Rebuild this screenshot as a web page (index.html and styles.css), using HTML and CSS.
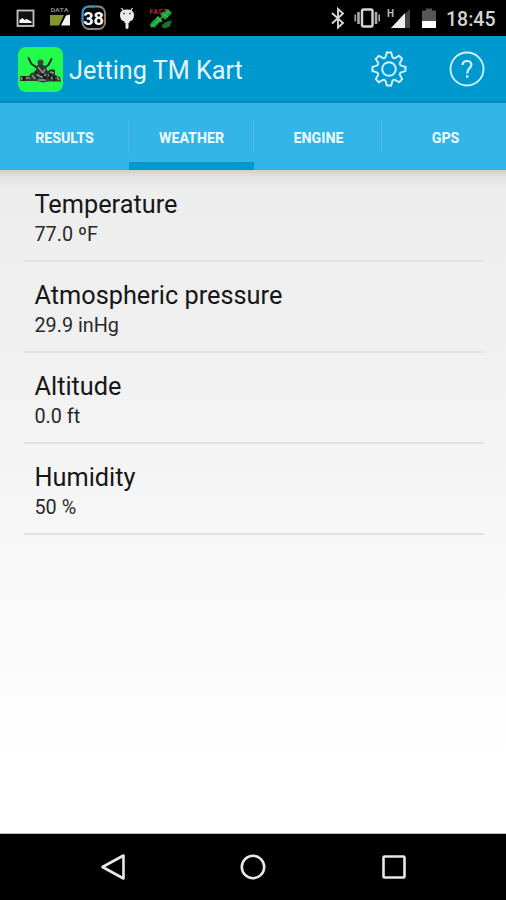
FILE: index.html
```html
<!DOCTYPE html>
<html lang="en">
<head>
<meta charset="utf-8">
<title>Jetting TM Kart</title>
<link rel="stylesheet" href="styles.css">
</head>
<body>
<div class="phone">
  <header class="status">
    <svg class="status-icons" width="180" height="36" viewBox="0 0 180 36">
      <rect x="17.500" y="10.500" width="16" height="15.500" fill="#111" stroke="#c4c4c4" stroke-width="1.800"/>
      <path d="M19.500 23v-3l3-2 2 2 2-1 5 2.500V23z" fill="#fff"/>
      <text class="tiny" x="50.500" y="12" textLength="18" lengthAdjust="spacingAndGlyphs">DATA</text>
      <path d="M50 15h14l-5 10.500h-9z" fill="#86962f"/>
      <path d="M70 14.500v11h-9l5-10z" fill="#f2f2f2"/>
      <rect x="82.500" y="6.500" width="22.500" height="22.500" rx="6.500" fill="#080808" stroke="#8b8b8b" stroke-width="1.800"/>
      <path d="M82.500 23V13q0-6.500 6.500-6.500h5" fill="none" stroke="#2298c8" stroke-width="1.800"/>
      <text class="badge" x="93.500" y="24.500" text-anchor="middle">38</text>
      <path d="M121.500 8l2 3M132.500 8l-2 3" stroke="#e8e8e8" stroke-width="1.300"/>
      <path d="M120 15q0-5.500 7-5.500t7 5.500-4.500 6.500v1.500h-1v5q-1.500 2-3 0v-5h-1v-1.500q-4.500-1-4.500-6.500z" fill="#eaeaea"/>
      <circle cx="124" cy="13.500" r=".9" fill="#444"/><circle cx="130" cy="13.500" r=".9" fill="#444"/>
      <path d="M153 21l5-5 4 4-5 5zM160 14l8-5 4 4-7 7zM149.500 25l4-5 5 3-4 5z" fill="#1c9e35"/>
      <path d="M161.500 27q1-5.500 10.500-6.500l-2 6-5 2z" fill="#1b6f2c"/>
      <path d="M151 27l18-16M157 17l5 5M163 13l5 4" stroke="#3bc24f" stroke-width="1.300" fill="none"/>
      <text class="tiny fast" x="149.500" y="13.500" textLength="18">FAST</text>
    </svg>
    <svg class="status-icons" width="116" height="36" viewBox="328 0 116 36">
      <path d="M332 13l11 10-5 4.500V9l5 4.500-11 10" fill="none" stroke="#d5d5d5" stroke-width="1.900"/>
      <rect x="362" y="9.500" width="10.500" height="17" rx="1.500" fill="#000" stroke="#d5d5d5" stroke-width="2.400"/>
      <path d="M358.500 12v12M376 12v12" stroke="#aaa" stroke-width="2.600"/><path d="M355.300 14.500v7M379.200 14.500v7" stroke="#aaa" stroke-width="1.600"/>
      <text class="net" x="387" y="17">H</text>
      <path d="M410 9v19h-19z" fill="#444"/><path d="M405 13v15h-14z" fill="#eee"/>
      <path d="M422 10.500h4V8.500h6v2h4V28h-14z" fill="#555"/><path d="M422 21h14v7h-14z" fill="#fff"/>
    </svg>
    <span class="clock">18:45</span>
  </header>

  <div class="appbar">
    <svg class="logo" width="45" height="45" viewBox="0 0 45 45">
      <rect width="45" height="45" rx="8" fill="#24fa4b"/>
      <path d="M10.500 11l3 6 6 4M33.500 12l-3 6-6 4" stroke="#192319" stroke-width="1.800" fill="none" stroke-linecap="round"/>
      <circle cx="22.500" cy="15.500" r="3" fill="#3b463f"/>
      <path d="M18 19l4.500-2 5 2 2 5 4-2 3.500 1v5l5 2 1 4.500H30l-5 1-6-1.500H2V29h9l2-3 5-1z" fill="#303732"/>
      <path d="M3.500 30v3M8 31h4M14 28l3 4M20 20l5 6M18 27l6 3 4-3M27 22l-2 4M30 28l5 4M32 25l4 1M39 30l2 3M20 33h8" stroke="#8d9690" stroke-width="1.500"/>
      <path d="M6 29v5M25 29l3 3M36 28v6M17 24l2 3M33 27l-2 5" stroke="#101510" stroke-width="1.800"/>
    </svg>
    <h1 class="title">Jetting TM Kart</h1>
    <div class="actions">
      <svg width="38" height="38" viewBox="-19 -19 38 38" fill="none" stroke="#d5f1fb" stroke-width="1.900" stroke-linejoin="round" stroke-linecap="round">
        <defs><path id="tooth" d="M-2.200-16.500H2.200L3.200-12.800C3.400-10.900 5.300-10.100 6.790-11.310L10.100-13.200"/></defs>
        <use href="#tooth"/>
        <use href="#tooth" transform="rotate(45)"/>
        <use href="#tooth" transform="rotate(90)"/>
        <use href="#tooth" transform="rotate(135)"/>
        <use href="#tooth" transform="rotate(180)"/>
        <use href="#tooth" transform="rotate(225)"/>
        <use href="#tooth" transform="rotate(270)"/>
        <use href="#tooth" transform="rotate(315)"/>
        <circle r="6.800"/>
      </svg>
      <svg width="38" height="38" viewBox="-19 -19 38 38" fill="none" stroke="#d5f1fb" stroke-width="1.800">
        <circle r="16.500"/>
        <path stroke-width="2.200" d="M-4.500-4Q-4.300-8 0-8T4.400-4.300C4.400-1 .2-.5.200 4.500"/>
        <path d="M.2 6.300v2.300" stroke-width="2.400"/>
      </svg>
    </div>
  </div>

  <nav class="tabs">
    <a class="tab">RESULTS</a>
    <a class="tab active">WEATHER</a>
    <a class="tab">ENGINE</a>
    <a class="tab">GPS</a>
  </nav>

  <main class="content">
    <section class="item"><h2 class="name">Temperature</h2><p class="value">77.0 ºF</p></section>
    <section class="item"><h2 class="name">Atmospheric pressure</h2><p class="value">29.9 inHg</p></section>
    <section class="item"><h2 class="name">Altitude</h2><p class="value">0.0 ft</p></section>
    <section class="item"><h2 class="name">Humidity</h2><p class="value">50 %</p></section>
  </main>

  <footer class="navbar">
    <svg width="30" height="30" viewBox="-15 -15 30 30"><path d="M-10.500 0L10.500-11.500V11.500z"/></svg>
    <svg width="30" height="30" viewBox="-15 -15 30 30"><circle r="11.200"/></svg>
    <svg width="30" height="30" viewBox="-15 -15 30 30"><rect x="-10.500" y="-10.500" width="21" height="21" rx="1"/></svg>
  </footer>
</div>
</body>
</html>
```
FILE: styles.css
```css
* { box-sizing: border-box; }

body {
  margin: 0;
  font-family: Roboto, sans-serif;
  background: #000;
}

.phone {
  width: 506px;
  height: 900px;
  display: flex;
  flex-direction: column;
  overflow: hidden;
}

.status {
  height: 36px;
  flex: none;
  display: flex;
  align-items: center;
  background: #000;
}

.status-icons { display: block; }
.status-icons + .status-icons { margin-left: 148px; }
.tiny { font: 700 6px Roboto, sans-serif; fill: #858585; }
.fast { fill: #b3232b; font-size: 7px; }
.badge { font: 700 18px Roboto, sans-serif; fill: #fff; }
.net { font: 700 10px Roboto, sans-serif; fill: #bbb; }

.clock {
  margin-left: 2px;
  font-size: 19.5px;
  font-weight: 500;
  line-height: 36px;
  color: #d4d4d4;
  padding-top: 3px;
}

.appbar {
  height: 67px;
  flex: none;
  display: flex;
  align-items: center;
  padding: 1px 20px 0 18px;
  background: #0099cf;
  border-bottom: 2px solid #0787b7;
}

.title {
  margin: 4px 0 0 6px;
  font-size: 25.2px;
  font-weight: 400;
  line-height: 30px;
  color: #e3f6fd;
  white-space: nowrap;
}

.actions {
  margin-left: auto;
  display: flex;
  gap: 40px;
}

.tabs {
  height: 67px;
  flex: none;
  display: grid;
  grid-template-columns: 129px 126px 127px 127px;
  background: #34b5e8;
}

.tab {
  display: flex;
  align-items: center;
  justify-content: center;
  padding-top: 2px;
  font-size: 14.2px;
  font-weight: 700;
  color: #f2fcff;
  background: linear-gradient(#4bbdea, #4bbdea) right 17px / 1px 33px no-repeat;
}

.tab.active {
  border-bottom: 8px solid #0099cf;
  padding-top: 10px;
  margin-right: 1px;
}

.content {
  flex: 1;
  padding: 1px 22px 0 24px;
  background:
    linear-gradient(rgba(0, 0, 0, .13), rgba(0, 0, 0, .05) 6px, rgba(0, 0, 0, .03) 12px, transparent 18px),
    linear-gradient(#ededed, #f0f0f0 25%, #f7f7f7 55%, #fff 90%);
  border-bottom: 1px solid #bbb;
}

.item {
  height: 91px;
  padding: 18px 0 0 10.500px;
  border-bottom: 2px solid #e2e2e2;
}

.name {
  margin: 0;
  font-size: 25.3px;
  font-weight: 400;
  line-height: 32px;
  color: #171717;
}

.value {
  margin: 2px 0 0;
  font-size: 19.8px;
  font-weight: 400;
  line-height: 24px;
  color: #292929;
}

.navbar {
  height: 66px;
  flex: none;
  display: flex;
  justify-content: center;
  align-items: center;
  gap: 110.500px;
  background: #000;
}

.navbar svg {
  fill: none;
  stroke: #e8e8e8;
  stroke-width: 2.600;
  stroke-linejoin: round;
}
```
